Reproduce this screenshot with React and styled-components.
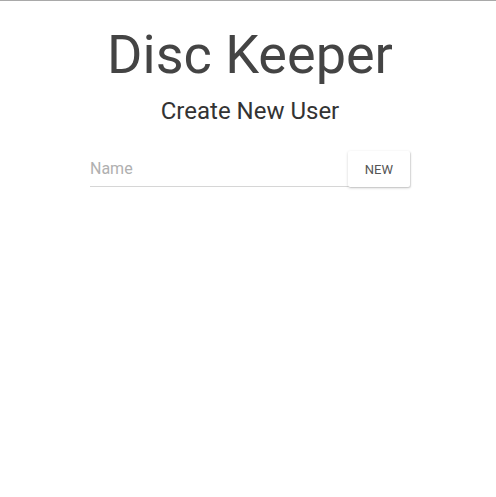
import React, { useState } from "react";
import styled, { createGlobalStyle } from "styled-components";

const GlobalStyle = createGlobalStyle`
  html, body {
    margin: 0;
    padding: 0;
    background: #fff;
    font-family: Roboto, "Liberation Sans", sans-serif;
  }
`;

const Page = styled.div`
  display: flex;
  flex-direction: column;
  align-items: center;
  min-height: 496px;
  padding-left: 4px;
  border-top: 1px solid #a9a9a9;
  box-sizing: border-box;
`;

const Title = styled.h1`
  margin: 22px 0 0;
  font-size: 54px;
  line-height: 64px;
  font-weight: 400;
  color: #444;
`;

const Subtitle = styled.h2`
  margin: 10px 0 0;
  font-size: 24px;
  line-height: 28px;
  font-weight: 400;
  color: #333;
`;

const Form = styled.form`
  display: flex;
  align-items: stretch;
  width: 320px;
  margin-top: 26px;
`;

const NameInput = styled.input`
  flex: 1;
  min-width: 0;
  height: 36px;
  padding: 0;
  margin-right: -2px;
  border: none;
  border-bottom: 1px solid #d6d6d6;
  outline: none;
  background: transparent;
  box-sizing: border-box;
  font-family: inherit;
  font-size: 16px;
  color: #333;

  &::placeholder {
    color: #b0b0b0;
  }
`;

const Button = styled.button`
  height: 36px;
  padding: 0 17px;
  border: none;
  border-radius: 2px;
  background: #fff;
  box-shadow: 0 1px 3px rgba(0, 0, 0, 0.18), 1px 1px 1px rgba(0, 0, 0, 0.1);
  font-family: inherit;
  font-size: 13px;
  color: #555;
  text-transform: uppercase;
  cursor: pointer;
  position: relative;
`;

export default function App() {
  const [name, setName] = useState("");
  return (
    <>
      <GlobalStyle />
      <Page>
        <Title>Disc Keeper</Title>
        <Subtitle>Create New User</Subtitle>
        <Form onSubmit={(e) => e.preventDefault()}>
          <NameInput
            placeholder="Name"
            value={name}
            onChange={(e) => setName(e.target.value)}
          />
          <Button type="submit">New</Button>
        </Form>
      </Page>
    </>
  );
}
